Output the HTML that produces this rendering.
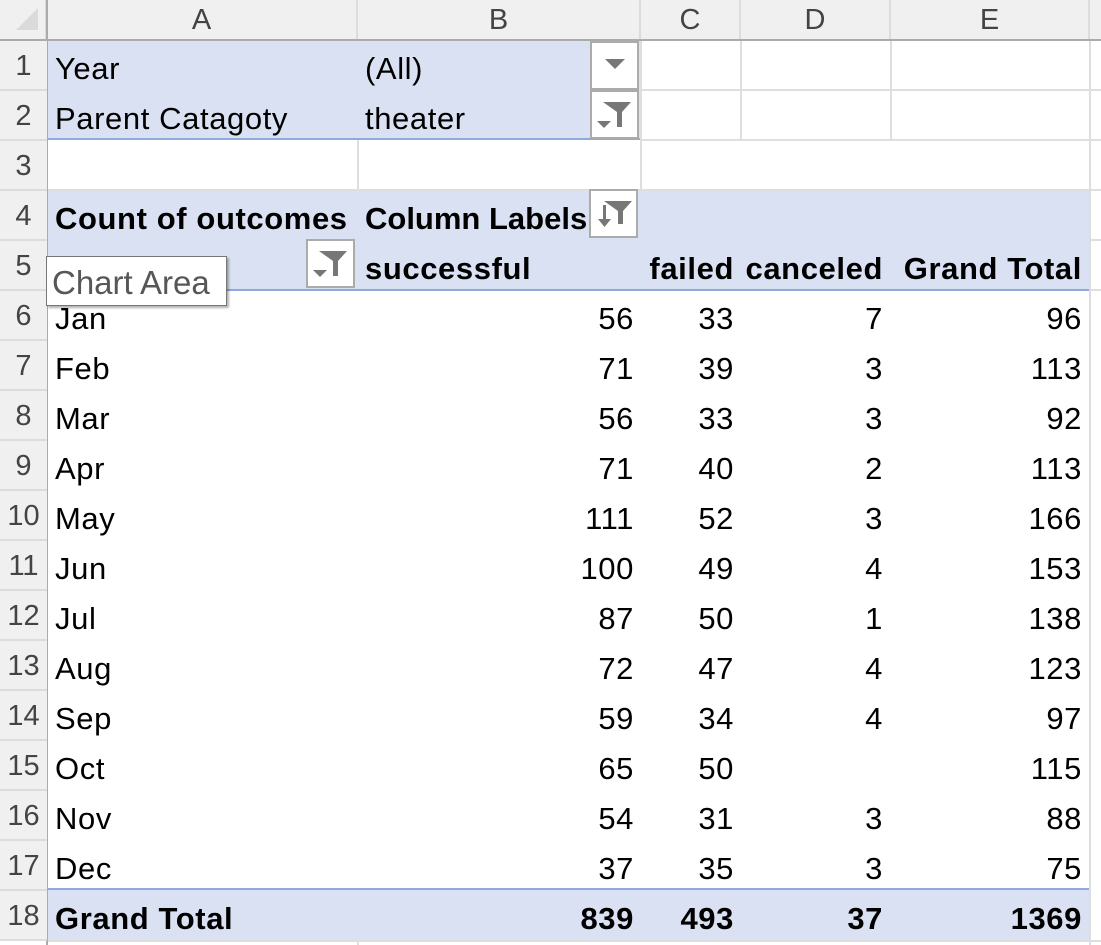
<!DOCTYPE html>
<html><head><meta charset="utf-8"><style>
html,body{margin:0;width:1101px;height:945px;overflow:hidden}
body{background:#fff;font-family:"Liberation Sans",sans-serif;position:relative}
div{position:absolute;box-sizing:border-box}
.ch{top:0;height:40px;background:#f0f0f0;border-right:2px solid #dcdcdc;font-size:29px;color:#444;text-align:center;line-height:40px}
.rh{left:0;width:47px;height:50px;background:#f0f0f0;border-bottom:2px solid #dcdcdc;font-size:29px;color:#444;text-align:center;line-height:50px}
.vl{width:2px;background:#dedede}
.hl{height:2px;background:#dedede}
.t{font-size:31px;letter-spacing:0.6px;color:#000;line-height:51px;white-space:nowrap}
.r{text-align:right}
.b{font-weight:bold}
.blue{background:#d9e1f2}
.btn{width:49px;height:49px;background:#fff;border:2px solid #ababab}
</style></head><body>
<div class="ch" style="left:0;width:47px;"><svg width="40" height="36" style="position:absolute;left:6px;top:2px"><polygon points="32,6 32,28 10,28" fill="#dadada"/></svg></div>
<div class="ch" style="left:47px;width:311px">A</div>
<div class="ch" style="left:358px;width:283px">B</div>
<div class="ch" style="left:641px;width:100px">C</div>
<div class="ch" style="left:741px;width:150px">D</div>
<div class="ch" style="left:891px;width:199px">E</div>
<div class="ch" style="left:1090px;width:11px;border:none"></div>
<div style="left:0;top:39px;width:1101px;height:2px;background:#ababab"></div>
<div style="left:46px;top:0;width:2px;height:945px;background:#ababab"></div>

<div class="vl" style="left:357px;top:41px;height:150px"></div>
<div class="vl" style="left:640px;top:41px;height:150px"></div>
<div class="vl" style="left:740px;top:41px;height:100px"></div>
<div class="vl" style="left:890px;top:41px;height:100px"></div>
<div class="vl" style="left:1089px;top:41px;height:904px"></div>
<div class="hl" style="left:640px;top:89px;width:461px"></div>
<div class="hl" style="left:640px;top:139px;width:461px"></div>
<div class="hl" style="left:48px;top:189px;width:1053px"></div>
<div class="hl" style="left:1090px;top:239px;width:11px"></div>
<div class="hl" style="left:1090px;top:289px;width:11px"></div>
<div class="hl" style="left:48px;top:940px;width:1053px"></div>
<div class="vl" style="left:357px;top:941px;height:4px"></div>

<div class="blue" style="left:48px;top:41px;width:592px;height:99px;border-bottom:2px solid #8ea9db"></div>
<div class="blue" style="left:48px;top:191px;width:1041px;height:100px;border-bottom:2px solid #8ea9db"></div>
<div class="blue" style="left:48px;top:888px;width:1041px;height:52px;border-top:2px solid #8ea9db"></div>

<div class="rh" style="top:41px">1</div><div class="rh" style="top:91px">2</div><div class="rh" style="top:141px">3</div>
<div class="rh" style="top:191px">4</div><div class="rh" style="top:241px">5</div><div class="rh" style="top:291px">6</div>
<div class="rh" style="top:341px">7</div><div class="rh" style="top:391px">8</div><div class="rh" style="top:441px">9</div>
<div class="rh" style="top:491px">10</div><div class="rh" style="top:541px">11</div><div class="rh" style="top:591px">12</div>
<div class="rh" style="top:641px">13</div><div class="rh" style="top:691px">14</div><div class="rh" style="top:741px">15</div>
<div class="rh" style="top:791px">16</div><div class="rh" style="top:841px">17</div><div class="rh" style="top:891px">18</div>

<div class="t" style="left:55px;top:43px">Year</div>
<div class="t" style="left:365px;top:43px">(All)</div>
<div class="t" style="left:55px;top:93px">Parent Catagoty</div>
<div class="t" style="left:365px;top:93px">theater</div>
<div class="btn" style="left:590px;top:41px"><svg width="45" height="45"><polygon points="13,16 33,16 23,26" fill="#777"/></svg></div>
<div class="btn" style="left:590px;top:90px"><svg width="45" height="45"><polygon points="11,10 39,10 30,20 30,35 25,35 25,20" fill="#777"/><polygon points="5,29 19,29 12,36" fill="#777"/></svg></div>

<div class="t b" style="left:55px;top:193px">Count of outcomes</div>
<div class="t b" style="left:365px;top:193px;letter-spacing:0">Column Labels</div>
<div class="btn" style="left:589px;top:189px"><svg width="45" height="45"><polygon points="13,10 41,10 32,20 32,33 27,33 27,20" fill="#777"/><rect x="12" y="14" width="3" height="16" fill="#777"/><polygon points="7,28 20,28 13.5,36" fill="#777"/></svg></div>
<div class="t b" style="left:365px;top:243px">successful</div>
<div class="t b r" style="left:641px;width:93px;top:243px">failed</div>
<div class="t b r" style="left:741px;width:142px;top:243px">canceled</div>
<div class="t b r" style="left:891px;width:191px;top:243px">Grand Total</div>
<div class="btn" style="left:306px;top:239px"><svg width="45" height="45"><polygon points="11,10 39,10 30,20 30,35 25,35 25,20" fill="#777"/><polygon points="5,29 19,29 12,36" fill="#777"/></svg></div>

<div style="left:0;top:293px;width:1101px">
<div class="t" style="left:55px;top:0">Jan</div><div class="t r" style="left:358px;width:276px;top:0">56</div><div class="t r" style="left:641px;width:93px;top:0">33</div><div class="t r" style="left:741px;width:142px;top:0">7</div><div class="t r" style="left:891px;width:191px;top:0">96</div>
<div class="t" style="left:55px;top:50px">Feb</div><div class="t r" style="left:358px;width:276px;top:50px">71</div><div class="t r" style="left:641px;width:93px;top:50px">39</div><div class="t r" style="left:741px;width:142px;top:50px">3</div><div class="t r" style="left:891px;width:191px;top:50px">113</div>
<div class="t" style="left:55px;top:100px">Mar</div><div class="t r" style="left:358px;width:276px;top:100px">56</div><div class="t r" style="left:641px;width:93px;top:100px">33</div><div class="t r" style="left:741px;width:142px;top:100px">3</div><div class="t r" style="left:891px;width:191px;top:100px">92</div>
<div class="t" style="left:55px;top:150px">Apr</div><div class="t r" style="left:358px;width:276px;top:150px">71</div><div class="t r" style="left:641px;width:93px;top:150px">40</div><div class="t r" style="left:741px;width:142px;top:150px">2</div><div class="t r" style="left:891px;width:191px;top:150px">113</div>
<div class="t" style="left:55px;top:200px">May</div><div class="t r" style="left:358px;width:276px;top:200px">111</div><div class="t r" style="left:641px;width:93px;top:200px">52</div><div class="t r" style="left:741px;width:142px;top:200px">3</div><div class="t r" style="left:891px;width:191px;top:200px">166</div>
<div class="t" style="left:55px;top:250px">Jun</div><div class="t r" style="left:358px;width:276px;top:250px">100</div><div class="t r" style="left:641px;width:93px;top:250px">49</div><div class="t r" style="left:741px;width:142px;top:250px">4</div><div class="t r" style="left:891px;width:191px;top:250px">153</div>
<div class="t" style="left:55px;top:300px">Jul</div><div class="t r" style="left:358px;width:276px;top:300px">87</div><div class="t r" style="left:641px;width:93px;top:300px">50</div><div class="t r" style="left:741px;width:142px;top:300px">1</div><div class="t r" style="left:891px;width:191px;top:300px">138</div>
<div class="t" style="left:55px;top:350px">Aug</div><div class="t r" style="left:358px;width:276px;top:350px">72</div><div class="t r" style="left:641px;width:93px;top:350px">47</div><div class="t r" style="left:741px;width:142px;top:350px">4</div><div class="t r" style="left:891px;width:191px;top:350px">123</div>
<div class="t" style="left:55px;top:400px">Sep</div><div class="t r" style="left:358px;width:276px;top:400px">59</div><div class="t r" style="left:641px;width:93px;top:400px">34</div><div class="t r" style="left:741px;width:142px;top:400px">4</div><div class="t r" style="left:891px;width:191px;top:400px">97</div>
<div class="t" style="left:55px;top:450px">Oct</div><div class="t r" style="left:358px;width:276px;top:450px">65</div><div class="t r" style="left:641px;width:93px;top:450px">50</div><div class="t r" style="left:891px;width:191px;top:450px">115</div>
<div class="t" style="left:55px;top:500px">Nov</div><div class="t r" style="left:358px;width:276px;top:500px">54</div><div class="t r" style="left:641px;width:93px;top:500px">31</div><div class="t r" style="left:741px;width:142px;top:500px">3</div><div class="t r" style="left:891px;width:191px;top:500px">88</div>
<div class="t" style="left:55px;top:550px">Dec</div><div class="t r" style="left:358px;width:276px;top:550px">37</div><div class="t r" style="left:641px;width:93px;top:550px">35</div><div class="t r" style="left:741px;width:142px;top:550px">3</div><div class="t r" style="left:891px;width:191px;top:550px">75</div>
<div class="t b" style="left:55px;top:600px">Grand Total</div><div class="t b r" style="left:358px;width:276px;top:600px">839</div><div class="t b r" style="left:641px;width:93px;top:600px">493</div><div class="t b r" style="left:741px;width:142px;top:600px">37</div><div class="t b r" style="left:891px;width:191px;top:600px">1369</div>
</div>

<div style="left:46px;top:256px;width:181px;height:50px;background:#fff;border:1px solid #767676;box-shadow:2px 2px 2px rgba(0,0,0,0.3);font-size:33px;color:#575757;line-height:52px;padding-left:5px;white-space:nowrap;overflow:hidden">Chart Area</div>
</body></html>
